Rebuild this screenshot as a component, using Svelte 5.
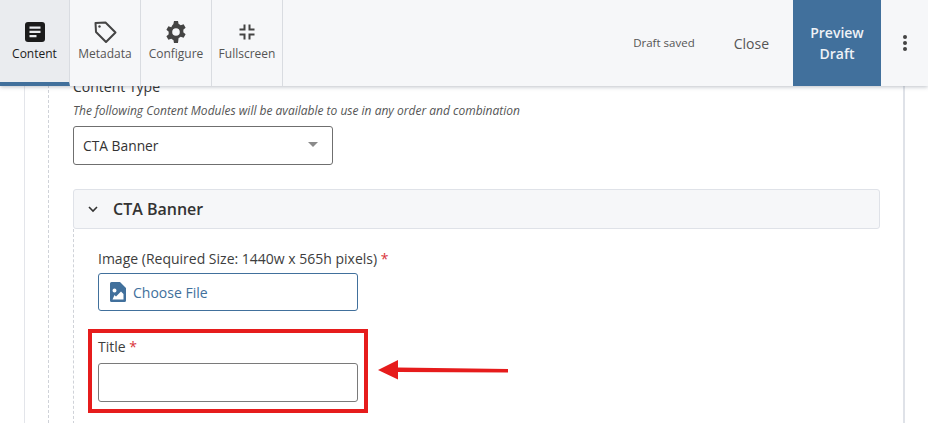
<script lang="ts">
	const tabs = [
		{ label: "Content", icon: "content", active: true },
		{ label: "Metadata", icon: "tag", active: false },
		{ label: "Configure", icon: "gear", active: false },
		{ label: "Fullscreen", icon: "compress", active: false },
	];
</script>

<header class="toolbar">
	<nav class="tabs">
		{#each tabs as tab}
			<button class="tab" class:active={tab.active}>
				<svg width="24" height="24" viewBox="0 0 24 24" aria-hidden="true">
					{#if tab.icon === "content"}
						<path fill="currentColor" d="M5 2h14a3 3 0 0 1 3 3v14a3 3 0 0 1-3 3H5a3 3 0 0 1-3-3V5a3 3 0 0 1 3-3z" />
						<path fill="#eaecef" d="M6.500 6.500h11v2.200h-11zM6.500 10.800h11V13h-11zM6.500 15.100h7v2.200h-7z" />
					{:else if tab.icon === "tag"}
						<path fill="none" stroke="currentColor" stroke-width="2" stroke-linejoin="round" d="M2.500 3 12.500 2.500 22.500 12.500 13 22 3 12z" />
						<circle cx="6.500" cy="6.500" r="1.200" fill="currentColor" />
					{:else if tab.icon === "gear"}
						<path fill="currentColor" fill-rule="evenodd" d="M10 1h4l.6 3a8 8 0 0 1 2.100 1.200l2.900-1 2 3.500-2.300 2a8 8 0 0 1 0 2.600l2.300 2-2 3.500-2.900-1a8 8 0 0 1-2.100 1.200L14 23h-4l-.6-3a8 8 0 0 1-2.100-1.200l-2.900 1-2-3.500 2.300-2a8 8 0 0 1 0-2.600l-2.300-2 2-3.500 2.900 1A8 8 0 0 1 9.400 4zM12 8.200a3.800 3.800 0 1 0 0 7.600 3.800 3.800 0 0 0 0-7.600z" />
					{:else}
						<path fill="none" stroke="currentColor" stroke-width="2" d="M9.500 4.500v5H4.500M14.500 4.500v5h5M9.500 19.500v-5H4.500M14.500 19.500v-5h5" />
					{/if}
				</svg>
				<span>{tab.label}</span>
			</button>
		{/each}
	</nav>
	<div class="actions">
		<span class="status">Draft saved</span>
		<button class="close">Close</button>
		<button class="preview">Preview<br />Draft</button>
		<button class="more" aria-label="More">
			<svg width="6" height="18" viewBox="0 0 6 18"><circle cx="3" cy="3" r="2" /><circle cx="3" cy="9" r="2" /><circle cx="3" cy="15" r="2" /></svg>
		</button>
	</div>
</header>

<main class="page">
	<section class="card">
		<div class="guide">
			<h3 class="type-label">Content Type</h3>
			<p class="hint">The following Content Modules will be available to use in any order and combination</p>
			<div class="select">
				<span>CTA Banner</span>
				<i class="caret"></i>
			</div>
			<div class="accordion">
				<svg width="10" height="7" viewBox="0 0 10 7"><path fill="none" stroke="#333" stroke-width="1.600" d="M1 1l4 4 4-4" /></svg>
				<span>CTA Banner</span>
			</div>
			<div class="fields">
				<label class="field-label" for="image">Image (Required Size: 1440w x 565h pixels) <em>*</em></label>
				<button class="file" id="image">
					<svg width="16" height="20" viewBox="0 0 16 20">
						<path fill="#41709c" fill-rule="evenodd" d="M1.500 0H10l6 6v12.500a1.500 1.500 0 0 1-1.500 1.500h-13A1.500 1.500 0 0 1 0 18.500v-17A1.500 1.500 0 0 1 1.500 0zM4.500 6.500a2 2 0 1 0 0 4 2 2 0 0 0 0-4zM2.500 17.500h11V12l-2.500-2.500-5 5-1.500-1.500z" />
					</svg>
					<span>Choose File</span>
				</button>
				<label class="field-label title" for="title">Title <em>*</em></label>
				<input id="title" type="text" />
			</div>
		</div>
	</section>
</main>

<!-- annotation drawn over the screenshot -->
<div class="callout"></div>
<svg class="arrow" width="132" height="24" viewBox="0 0 132 24">
	<path fill="#e61c1c" d="M0 11 L20 1 V8.500 L130 10 V13.500 L20 13 V20.500z" />
</svg>

<style>
	:global(body) {
		margin: 0;
		background: #fff;
		overflow: hidden;
		font-family: "Open Sans", sans-serif;
		color: #333;
	}

	button {
		font-family: inherit;
		border: none;
		background: none;
		padding: 0;
	}

	.toolbar {
		position: relative;
		z-index: 2;
		display: flex;
		justify-content: space-between;
		height: 86px;
		background: #f6f7f9;
		box-shadow: 0 1px 4px rgba(70, 80, 100, 0.35);
	}

	.tabs {
		display: flex;
	}

	.tab {
		box-sizing: border-box;
		width: 71px;
		display: flex;
		flex-direction: column;
		align-items: center;
		padding-top: 20px;
		gap: 1px;
		font-size: 12px;
		color: #555;
		border-right: 1px solid #d9dce1;
	}

	.tab svg {
		color: #444;
	}

	.tab:first-child {
		width: 70px;
	}

	.tab.active {
		color: #1b1b1b;
		background: #eaecef;
		border-bottom: 4px solid #41709c;
	}

	.tab.active svg {
		color: #1b1b1b;
	}

	.actions {
		display: flex;
		align-items: stretch;
	}

	.status {
		align-self: center;
		margin-right: 39px;
		margin-top: -1px;
		font-size: 11.500px;
		color: #555;
	}

	.close {
		margin-right: 24px;
		font-size: 14px;
		color: #555;
	}

	.preview {
		width: 88px;
		background: #41709c;
		color: #eef2f6;
		font-size: 14px;
		font-weight: 600;
		line-height: 21px;
	}

	.more {
		width: 47px;
		display: flex;
		align-items: center;
		justify-content: center;
	}

	.more svg {
		fill: #444;
	}

	.page {
		margin-top: -6px;
		padding-left: 24px;
		padding-right: 23px;
	}

	.card {
		box-sizing: border-box;
		height: 343px;
		border-left: 1px solid #e3e5ea;
		border-right: 2px solid #dfe2e8;
		padding-left: 23px;
		padding-right: 23px;
	}

	.guide {
		height: 100%;
		box-sizing: border-box;
		border-left: 1px dashed #cfd2d8;
		padding-left: 24px;
	}

	.type-label {
		margin: 0;
		height: 23px;
		font-size: 14px;
		font-weight: 400;
		line-height: 14px;
	}

	.hint {
		margin: 0 0 7px;
		font-size: 12px;
		font-style: italic;
		line-height: 16px;
		color: #555;
	}

	.select {
		box-sizing: border-box;
		display: flex;
		align-items: center;
		justify-content: space-between;
		width: 260px;
		height: 39px;
		padding: 0 14px 0 9px;
		border: 1px solid #6f6f6f;
		border-radius: 3px;
		font-size: 13.800px;
	}

	.caret {
		margin-top: -3px;
		border-left: 5px solid transparent;
		border-right: 5px solid transparent;
		border-top: 5px solid #8a8a8a;
	}

	.accordion {
		box-sizing: border-box;
		display: flex;
		align-items: center;
		gap: 15px;
		height: 40px;
		margin-top: 24px;
		padding-left: 14px;
		background: #f6f7f9;
		border: 1px solid #dfe2e8;
		border-radius: 3px;
		font-size: 16px;
		font-weight: 600;
	}

	.fields {
		height: 195px;
		box-sizing: border-box;
		border-left: 1px dashed #cfd2d8;
		padding: 20px 0 0 24px;
	}

	.field-label {
		display: block;
		font-size: 14px;
		line-height: 19px;
		color: #3d3d3d;
	}

	.field-label em {
		font-style: normal;
		color: #d9343a;
	}

	.file {
		box-sizing: border-box;
		display: flex;
		align-items: center;
		gap: 7px;
		width: 260px;
		height: 38px;
		margin-top: 5px;
		padding-left: 11px;
		border: 1px solid #41709c;
		border-radius: 3px;
		font-size: 14px;
		color: #41709c;
	}

	.title {
		margin-top: 26px;
	}

	input {
		box-sizing: border-box;
		display: block;
		width: 260px;
		height: 39px;
		margin-top: 7px;
		border: 1px solid #7a7a7a;
		border-radius: 3px;
		background: #fff;
	}

	.callout {
		position: absolute;
		z-index: 3;
		left: 88px;
		top: 329px;
		width: 272px;
		height: 76px;
		border: 4px solid #e61c1c;
	}

	.arrow {
		position: absolute;
		z-index: 3;
		left: 378px;
		top: 359px;
	}
</style>
